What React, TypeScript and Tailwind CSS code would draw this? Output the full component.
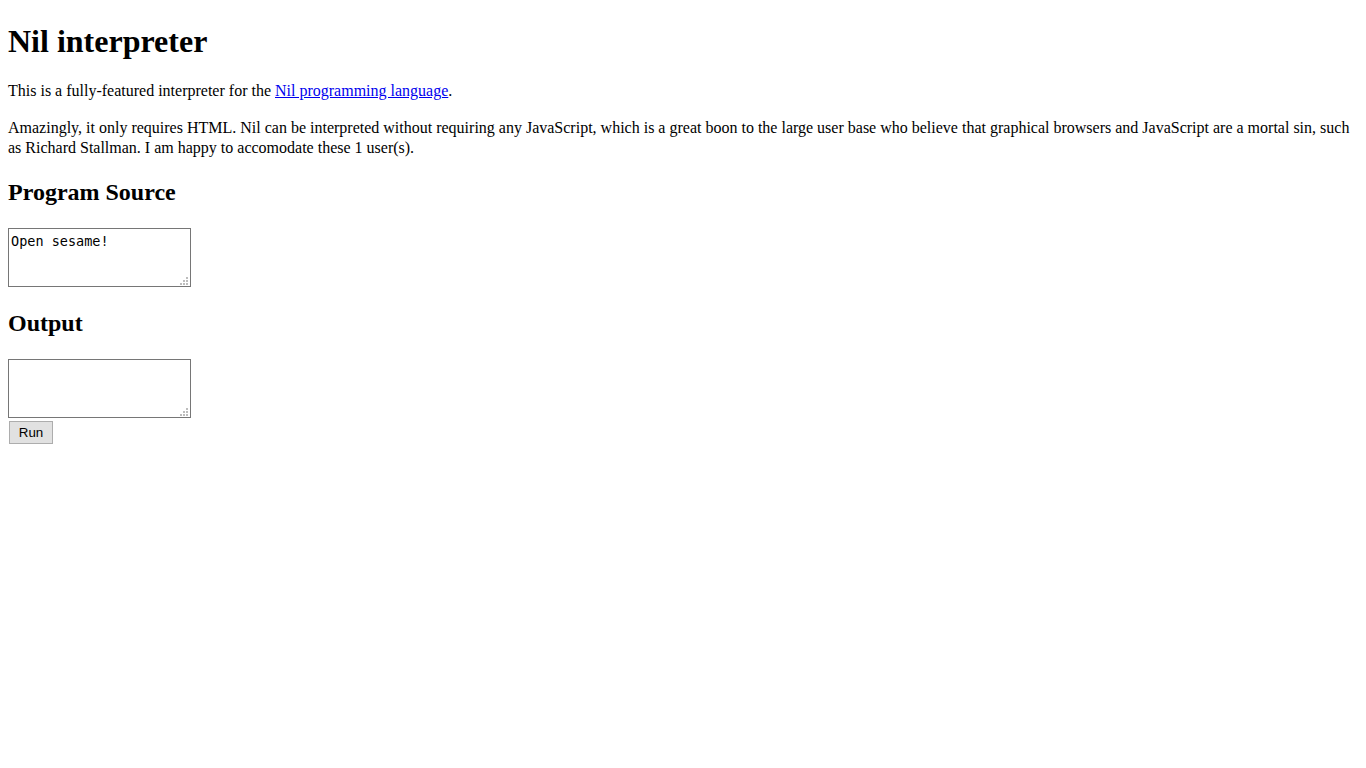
import React from "react";

const GRIP = [0, 0, 1, 0, 1, 1, 1, 1, 1];

function Grip() {
  return (
    <div className="pointer-events-none absolute right-[3px] bottom-[2px] grid grid-cols-3 gap-px">
      {GRIP.map((on, i) => (
        <span key={i} className={on ? "w-[2px] h-[2px] bg-[#bdbdbd]" : "w-[2px] h-[2px]"} />
      ))}
    </div>
  );
}

function Area({ value }: { value: string }) {
  return (
    <div className="relative w-[183px] h-[59px]">
      <textarea
        defaultValue={value}
        className="block w-full h-full resize-none border border-[#767676] px-[2px] pt-[4px] pb-[2px] font-['DejaVu_Sans_Mono',monospace] text-[13.5px] leading-[normal] text-black bg-white outline-none"
      />
      <Grip />
    </div>
  );
}

export default function App() {
  return (
    <div className="flex flex-col items-start px-2 pb-2 text-black bg-white font-['Liberation_Serif',serif] text-[16px]">
      <h1 className="text-[32px] font-bold pt-[21.44px] mb-[19.2px] leading-[40px]">Nil interpreter</h1>
      <p className="leading-[20px]">
        This is a fully-featured interpreter for the{" "}
        <a href="#" className="text-[#0000ee] underline">Nil programming language</a>.
      </p>
      <p className="mt-[17px] leading-[20px]">
        Amazingly, it only requires HTML. Nil can be interpreted without requiring any JavaScript, which is a great boon to the large user base who believe that graphical browsers and JavaScript are a mortal sin, such as Richard Stallman. I am happy to accomodate these 1 user(s).
      </p>
      <h2 className="text-[24px] font-bold mt-[19px] mb-[21px] leading-[30px]">Program Source</h2>
      <Area value="Open sesame!" />
      <h2 className="text-[24px] font-bold mt-[21px] mb-[21px] leading-[30px]">Output</h2>
      <Area value="" />
      <button className="mt-[3px] ml-px w-[44px] h-[23px] pt-[2px] flex items-center justify-center bg-[#e1e1e1] border border-[#adadad] font-['Liberation_Sans',sans-serif] text-[13.33px] leading-none text-black">
        Run
      </button>
    </div>
  );
}
